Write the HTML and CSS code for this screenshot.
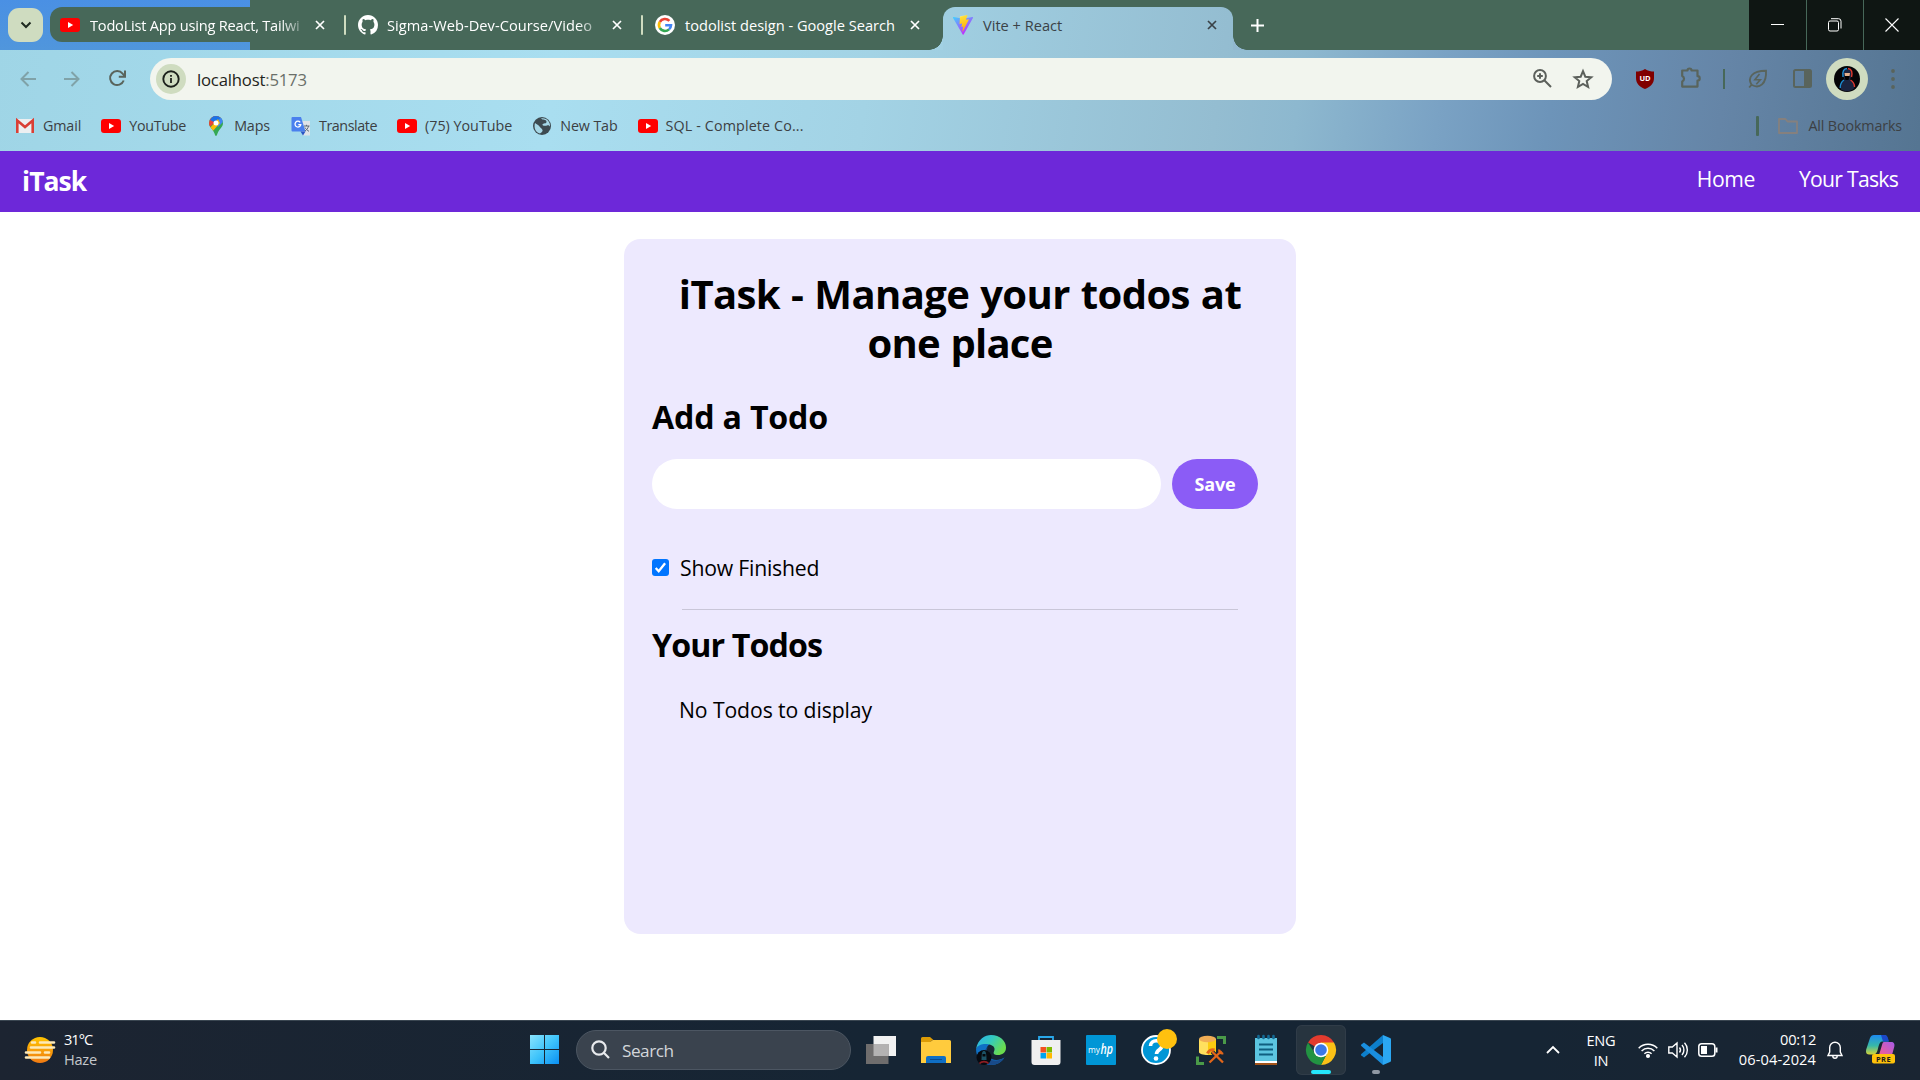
FILE: index.html
```html
<!DOCTYPE html>
<html lang="en">
<head>
<meta charset="utf-8">
<title>Vite + React</title>
<link rel="stylesheet" href="styles.css">
</head>
<body>
<svg class="defs" aria-hidden="true">
  <symbol id="yt" viewBox="0 0 20 20"><rect y="3" width="20" height="14" rx="3" fill="#f00"/><path d="M8 7l5.200 3L8 13z" fill="#fff"/></symbol>
  <symbol id="x" viewBox="0 0 10 10"><path d="M1 1l8 8M9 1L1 9" stroke="currentColor" stroke-width="1.700" fill="none"/></symbol>
</svg>

<header class="browser">
  <div class="tabstrip">
    <button class="tab-search"><svg width="12" height="8" viewBox="0 0 12 8"><path d="M1.500 1.500L6 6l4.500-4.500" fill="none" stroke="#1f2a20" stroke-width="2"/></svg></button>
    <div class="tab first">
      <svg class="fav"><use href="#yt"/></svg>
      <span class="tab-title fade">TodoList App using React, Tailwi</span>
      <svg class="close"><use href="#x"/></svg>
    </div>
    <i class="tab-sep"></i>
    <div class="tab second">
      <svg class="fav" viewBox="0 0 16 16"><path fill="#fff" d="M8 0C3.580 0 0 3.580 0 8c0 3.540 2.290 6.530 5.470 7.590.4.070.55-.17.55-.38 0-.19-.010-.82-.010-1.490-2.010.37-2.530-.49-2.690-.94-.090-.23-.48-.94-.82-1.130-.28-.15-.68-.52-.010-.53.63-.010 1.080.58 1.230.82.72 1.210 1.870.87 2.330.66.070-.52.28-.87.51-1.070-1.780-.2-3.640-.89-3.640-3.950 0-.87.31-1.590.82-2.150-.080-.2-.36-1.020.080-2.120 0 0 .67-.21 2.200.82.64-.18 1.320-.27 2-.27s1.360.090 2 .27c1.530-1.040 2.200-.82 2.200-.82.44 1.100.16 1.920.080 2.120.51.56.82 1.270.82 2.150 0 3.070-1.870 3.750-3.650 3.950.29.25.54.73.54 1.480 0 1.070-.010 1.930-.010 2.200 0 .21.15.46.55.38A8.010 8.010 0 0 0 16 8c0-4.420-3.580-8-8-8z"/></svg>
      <span class="tab-title fade">Sigma-Web-Dev-Course/Video</span>
      <svg class="close"><use href="#x"/></svg>
    </div>
    <i class="tab-sep"></i>
    <div class="tab third">
      <svg class="fav" viewBox="0 0 20 20"><circle cx="10" cy="10" r="10" fill="#fff"/><g fill="none" stroke-width="2.600"><path d="M14.400 5.900A6 6 0 0 0 4.800 7" stroke="#ea4335"/><path d="M4.800 7a6 6 0 0 0 0 6" stroke="#fbbc05"/><path d="M4.800 13a6 6 0 0 0 9.200 1.400" stroke="#34a853"/><path d="M14 14.400A6 6 0 0 0 16 10.200H10.200" stroke="#4285f4"/></g></svg>
      <span class="tab-title">todolist design - Google Search</span>
      <svg class="close"><use href="#x"/></svg>
    </div>
    <div class="tab active">
      <svg class="fav" viewBox="0 0 32 32"><defs><linearGradient id="va" x1="0" y1="0" x2=".6" y2=".9"><stop stop-color="#41d1ff"/><stop offset="1" stop-color="#bd34fe"/></linearGradient><linearGradient id="vb" x1=".4" y1="0" x2=".6" y2="1"><stop stop-color="#ffea83"/><stop offset=".1" stop-color="#ffdd35"/><stop offset="1" stop-color="#ffa800"/></linearGradient></defs><path d="M31.900 4.800L17 31c-.3.600-1.100.6-1.500 0L.1 4.800C-.3 4 .3 3.200 1.100 3.300l15 2.700 14.800-2.700c.8-.1 1.400.7 1 1.500z" fill="url(#va)"/><path d="M22.500 0l-11 2.100c-.2 0-.3.2-.3.400l-.7 11.400c0 .3.200.5.500.4l3-.7c.3-.1.600.2.5.5l-.9 4.500c-.1.300.2.500.5.400l1.900-.6c.3-.1.600.2.500.5l-1.500 7c-.1.400.5.700.8.300l9.400-18.600c.2-.3-.1-.7-.5-.6l-3.300.6c-.3.100-.6-.2-.5-.5L23 .5c.1-.3-.2-.6-.5-.5z" fill="url(#vb)"/></svg>
      <span class="tab-title">Vite + React</span>
      <svg class="close"><use href="#x"/></svg>
    </div>
    <svg class="new-tab" viewBox="0 0 13 13"><path d="M6.500 0v13M0 6.500h13" stroke="#fff" stroke-width="2"/></svg>
    <div class="win-controls">
      <button><svg width="14" height="14"><path d="M0 6.500h13" stroke="#fff"/></svg></button>
      <button><svg width="14" height="14" fill="none" stroke="#fff"><rect x=".5" y="3" width="10" height="10" rx="1.500"/><path d="M3 .7h7.500a2.500 2.500 0 0 1 2.500 2.500V10.500"/></svg></button>
      <button><svg width="14" height="14"><path d="M.5.5l13 13M13.500.5l-13 13" stroke="#fff" stroke-width="1.100"/></svg></button>
    </div>
  </div>

  <div class="toolbar">
    <svg class="nav back" viewBox="0 0 16 16"><path d="M16 8H1.500M8.500 1L1.500 8l7 7"/></svg>
    <svg class="nav fwd" viewBox="0 0 16 16"><path d="M0 8h14.500M7.500 1l7 7-7 7"/></svg>
    <svg class="nav reload" viewBox="0 0 17 17"><path d="M14.700 10.500A7 7 0 1 1 13.600 3.700L15.600 6"/><path d="M16 .5V6.700H9.800"/></svg>
    <div class="omnibox">
      <span class="info"><svg width="18" height="18" viewBox="0 0 18 18"><circle cx="9" cy="9" r="7.700" fill="none" stroke="#1c211b" stroke-width="1.900"/><path d="M9 8v5M9 4.900v1.900" stroke="#1c211b" stroke-width="1.800"/></svg></span>
      <span class="url">localhost<span class="port">:5173</span></span>
      <svg class="zoom" viewBox="0 0 19 19"><circle cx="7" cy="7" r="5.900"/><path d="M11.300 11.300l6.700 6.700M7 4.200v5.600M4.200 7h5.600"/></svg>
      <svg class="star" viewBox="0 0 20 20"><path d="M10 2.200l2.300 5.500 6 .5-4.600 3.900 1.400 5.900L10 14.900 4.900 18l1.400-5.900L1.700 8.200l6-.5z"/></svg>
    </div>
    <svg class="ublock" viewBox="0 0 20 20"><path d="M10 0c3 2 6 2.500 9 2.500V9c0 6-4 9-9 11C5 18 1 15 1 9V2.500C4 2.500 7 2 10 0z" fill="#800000"/><text x="10" y="12" text-anchor="middle" font-size="7.500" font-weight="700" fill="#fff">UD</text></svg>
    <svg class="puzzle" viewBox="0 0 22 22"><path d="M2.200 4.500H7.500a2 2 0 0 1 4 0h6v5.700a2.200 2.200 0 0 1 0 4.400v6H2.200v-5.200a3 3 0 0 0 0-5.500z" fill="none" stroke="#59645c" stroke-width="2.200" stroke-linejoin="round"/></svg>
    <i class="tool-sep"></i>
    <svg class="leaf" viewBox="0 0 20 20" fill="none" stroke="#59645c" stroke-width="1.900"><path d="M3.500 15.800C-.5 9 3.500 1.800 18 1.800c.8 13-6.500 18.600-14.500 14zM3.800 15.500L1.200 18.500"/><path d="M11.500 5L6.800 10.800h5.500L8.300 15.300" stroke-width="1.600"/></svg>
    <svg class="panel" viewBox="0 0 19 19"><rect x="1" y="1" width="17" height="17" rx="1.500" fill="none" stroke="#59645c" stroke-width="2"/><path d="M11 1h7v17h-7z" fill="#59645c"/></svg>
    <span class="avatar"><svg width="26" height="26" viewBox="0 0 26 26"><circle cx="13" cy="13" r="13" fill="#050507"/><path d="M6.500 23c0-5 1.500-8 4-9L9 9c0-4 2-6 4.500-6S18 5 17.500 9L16 14c3 1 4.500 4 4.500 8-3 4-11 4-14 1z" fill="#1b2440"/><path d="M9 11C8 5 10 2.700 13 2.500M10 14c-3 2-3.800 5-3.800 8" stroke="#1d8fd6" stroke-width="1.400" fill="none"/><path d="M14 2.500c4 .5 4.500 4 3.500 8.500M16.500 14c3.500 2 4 5 4 7" stroke="#e0392f" stroke-width="1.400" fill="none"/><path d="M10.500 7h5.500l-.5 3h-4.500z" fill="#e3b08e"/><path d="M10.500 10h5l-1 4h-3z" fill="#000"/></svg></span>
    <svg class="dots" viewBox="0 0 4 20" fill="#59645c"><circle cx="2" cy="2" r="1.900"/><circle cx="2" cy="10" r="1.900"/><circle cx="2" cy="18" r="1.900"/></svg>
  </div>

  <nav class="bookmarks">
    <a class="gmail"><svg viewBox="0 0 20 20"><rect x="1" y="3" width="18" height="14" rx="1.500" fill="#eceff1"/><path d="M2.300 17V4.500L10 11l7.700-6.500V17" fill="none" stroke="#d93f35" stroke-width="2.600"/></svg><span>Gmail</span></a>
    <a class="youtube"><svg><use href="#yt"/></svg><span>YouTube</span></a>
    <a><svg viewBox="0 0 20 20"><defs><clipPath id="pin"><path d="M10 0a7 7 0 0 1 7 7c0 4-3.500 5.500-5.500 10.500C11 19 10.700 20 10 20s-1-1-1.500-2.500C6.500 12.500 3 11 3 7a7 7 0 0 1 7-7z"/></clipPath></defs><g clip-path="url(#pin)"><path d="M0 0h20v20H0z" fill="#34a853"/><path d="M0 14L17 0H0z" fill="#ea4335"/><path d="M7 0L4 4l6 3 7-3V0z" fill="#1a73e8"/><path d="M10 7l6-7 4 3-8 8z" fill="#4285f4"/><path d="M3 13l9-10 2 4-8 9z" fill="#fbbc04"/></g><circle cx="10" cy="7" r="2.500" fill="#fff"/></svg><span>Maps</span></a>
    <a class="translate"><svg viewBox="0 0 20 20"><path d="M8 5h11v14.500H12z" fill="#dfe3e8"/><path d="M1.500 1h8.500l4.500 14.500h-13A1 1 0 0 1 .5 14.500V2a1 1 0 0 1 1-1z" fill="#4a80ee"/><path d="M9.500 15.500h5L12 19.500z" fill="#2a56c6"/><path d="M9.200 6.300A2.900 2.900 0 1 0 9.800 8.600H7.300" fill="none" stroke="#fff" stroke-width="1.300"/><path d="M13 10h5.500M15.500 8.800V10M17.500 10c-.5 2.500-2 4-3.500 5M14 11.500c.8 1.800 2.500 3 4 3.800" stroke="#5f6b78" fill="none"/></svg><span>Translate</span></a>
    <a class="queue"><svg><use href="#yt"/></svg><span>(75) YouTube</span></a>
    <a><svg viewBox="0 0 20 20"><circle cx="10" cy="10" r="9" fill="#3d4a50"/><path d="M3 7c2 2 3.500 1.500 4.500 3.500S10 12 10.500 14 8.500 17 8 17.500C4 17 1.500 12 3 7zM9 2.500c2 2 5 .5 5.500 3S11 7 10.500 8.500s3 1.500 4.500 1 2 0 3 1c.5-4-3-9-9-8z" fill="#a6d7e6"/></svg><span>New Tab</span></a>
    <a class="sql"><svg><use href="#yt"/></svg><span>SQL - Complete Co...</span></a>
    <i class="mark-sep"></i>
    <svg class="folder" viewBox="0 0 20 16"><path d="M1 1h6.500l2 2.500H19V15H1z" fill="none" stroke="#85807e" stroke-width="1.800" stroke-linejoin="round"/></svg>
    <span>All Bookmarks</span>
  </nav>
</header>

<main class="page">
  <nav class="site-nav">
    <span class="brand">iTask</span>
    <ul><li>Home</li><li class="tasks">Your Tasks</li></ul>
  </nav>
  <section class="card">
    <h1>iTask - Manage your todos at <span>one place</span></h1>
    <h2 class="add">Add a Todo</h2>
    <div class="entry"><input type="text"><button>Save</button></div>
    <label class="finished"><span class="check"><svg viewBox="0 0 17 17"><path d="M3.700 9l3 3.300 6.400-8" fill="none" stroke="#fff" stroke-width="2.300"/></svg></span>Show Finished</label>
    <hr>
    <h2 class="yours">Your Todos</h2>
    <p class="empty">No Todos to display</p>
  </section>
</main>

<footer class="taskbar">
  <div class="weather">
    <svg width="30" height="28" viewBox="0 0 30 28"><defs><linearGradient id="sun" x1="0" y1="0" x2="0" y2="1"><stop stop-color="#ffc400"/><stop offset="1" stop-color="#f07a13"/></linearGradient></defs><circle cx="15" cy="14" r="13" fill="url(#sun)"/><g stroke="#fde9b8" stroke-width="2.600" stroke-linecap="round"><path d="M7 6.500h3M15 6.500h14M6 11.500h23M1 16.500h14M20 16.500h4M1 21.500h23"/></g></svg>
    <p><span class="temp">31°C</span><br><span class="dim">Haze</span></p>
  </div>
  <svg class="start" viewBox="0 0 29 29"><defs><linearGradient id="win" x1="0" y1="0" x2="1" y2="1"><stop stop-color="#8ae4fd"/><stop offset=".5" stop-color="#3fc4fb"/><stop offset="1" stop-color="#0a8ff2"/></linearGradient></defs><path d="M0 0h14v14H0zM15 0h14v14H15zM0 15h14v14H0zM15 15h14v14H15z" fill="url(#win)"/></svg>
  <div class="search"><svg width="19" height="19" viewBox="0 0 19 19" fill="none" stroke="#e8eaed" stroke-width="2.200"><circle cx="8" cy="8" r="6.700"/><path d="M12.800 12.800L18 18"/></svg><span>Search</span></div>
  <div class="apps">
    <span><svg viewBox="0 0 30 30"><rect x="7.500" y="1" width="22.500" height="20" fill="#f2f2f2"/><rect x="0" y="9" width="22.500" height="20" fill="#6f6d6d"/><rect x="7.500" y="9" width="15" height="12" fill="#b4b2b2"/></svg></span>
    <span><svg viewBox="0 0 30 30"><path d="M0 3.500A1.500 1.500 0 0 1 1.500 2H9l4 3.500h-2L8 8H0z" fill="#dd9c06"/><path d="M0 7h9l3-2h16.500A1.500 1.500 0 0 1 30 6.500V28H0z" fill="#ffcb3d"/><path d="M5 28v-5a2 2 0 0 1 2-2h16a2 2 0 0 1 2 2v5z" fill="#0f6fc5"/><path d="M9 24.500h12" stroke="#0a4a8f"/></svg></span>
    <span><svg viewBox="0 0 30 30"><defs><linearGradient id="ed" x1="0" y1="0" x2="1" y2=".5"><stop stop-color="#2bb0ee"/><stop offset=".5" stop-color="#33c9c0"/><stop offset="1" stop-color="#6bdc4e"/></linearGradient></defs><path d="M0 14C3 7 9 6 14 9c-4 2-5 8-2 12 4 5 11 5 16.500 1.500C26 27 21 30 15 30 6 30 0 23 0 14z" fill="#0f70c4"/><path d="M12 12c-4 6 0 14 8 13.500 3 0 6-1 8.500-3C26 27 21 30 15 30 6 30 4 18 12 12z" fill="#194a88"/><path d="M0 14C2 4 9 0 15 0c9 0 15 6 15 12.500C30 18 26 20 22 20s-5-1.500-4-3.500 1-5-3-6.500S3 8 0 14z" fill="url(#ed)"/><circle cx="8" cy="22.500" r="7.500" fill="#070a10"/><path d="M5.500 25c0-8 1-9 2.500-9s2.500 1 2.500 9z" fill="#1c5266"/><path d="M6.500 19h3v2.500h-3z" fill="#06080c"/><path d="M3.500 28.500c2-2.500 7-2.500 9 0" stroke="#8c1d22" fill="none" stroke-width="1.600"/></svg></span>
    <span><svg viewBox="0 0 30 30"><path d="M8 6V2h14v4" fill="none" stroke="#29a8ea" stroke-width="1.800"/><path d="M.5 5h29v22a3 3 0 0 1-3 3h-23a3 3 0 0 1-3-3z" fill="#f0f0f0"/><path d="M9.500 12H15v5.500H9.500z" fill="#f25022"/><path d="M15.500 12H21v5.500h-5.500z" fill="#7fba00"/><path d="M9.500 18H15v5.500H9.500z" fill="#00a4ef"/><path d="M15.500 18H21v5.500h-5.500z" fill="#ffb900"/></svg></span>
    <span><svg viewBox="0 0 30 30"><rect width="30" height="30" rx="1" fill="#0096d6"/><text x="2" y="18" font-size="9" fill="#fff" textLength="12" lengthAdjust="spacingAndGlyphs">my</text><text x="14.500" y="19" font-size="13.500" font-weight="600" font-style="italic" fill="#fff" textLength="12.500" lengthAdjust="spacingAndGlyphs">hp</text></svg></span>
    <span><svg viewBox="0 0 30 30"><circle cx="15" cy="15" r="14" fill="#0096d6" stroke="#fff" stroke-width="1.800"/><path d="M9.500 11c0-7 11.500-7 11.500-.5 0 4.500-5.500 4-5.500 8.500" fill="none" stroke="#fff" stroke-width="3.600"/><circle cx="15" cy="23.500" r="2.300" fill="#fff"/><circle cx="26" cy="4" r="10" fill="#ffc10f"/></svg></span>
    <span><svg viewBox="0 0 30 30"><path d="M3 4v13c0 4 17 4 17 0V4z" fill="#ffe05e"/><path d="M12 5h8v12c-2 2.500-5 3-8 3z" fill="#fbcb10"/><ellipse cx="11.500" cy="4" rx="8.500" ry="3.200" fill="#f0ad55"/><path d="M21 2.500h7.500V9M1.500 21.500v7H8" fill="none" stroke="#4a9a48" stroke-width="3"/><g fill="none" stroke="#162534" stroke-width="4"><path d="M13.500 27.500l12-11.500M16 16.500l11 11"/></g><g fill="none" stroke="#e2661a"><path d="M13.500 27.500l12-11.500M16 16.500l11 11" stroke-width="2.300"/><path d="M11.500 18.500c1-3 4-4.500 7-3.500" stroke-width="3"/><path d="M23.300 14.500c-.5 2.800 1.500 4.300 4 3.700" stroke-width="2.200"/></g></svg></span>
    <span><svg viewBox="0 0 30 30"><path d="M4 3h22v24H4z" fill="#5cc5e0"/><path d="M4 26h22v2H4z" fill="#fff"/><path d="M4 28h22v2H4z" fill="#a3541a"/><path d="M8 9.500h14M8 14.500h14M8 19.500h14" stroke="#0f5f80" stroke-width="2"/><path d="M7.500 1v2M12.500 1v2M17.500 1v2M22.500 1v2" stroke="#146a94" stroke-width="2.600" stroke-linecap="round"/></svg></span>
    <span class="current"><svg viewBox="0 0 30 30"><path d="M15 15L2 7.500A15 15 0 0 1 28 7.500z" fill="#e33b2e"/><path d="M15 7.500h13A15 15 0 0 1 15 30l6-11.500z" fill="#fbc116"/><path d="M2 7.500L8.900 18.500 15 22l6-3.500L15 30A15 15 0 0 1 2 7.500z" fill="#229342"/><circle cx="15" cy="15" r="7.300" fill="#fff"/><circle cx="15" cy="15" r="5.800" fill="#3b78e7"/></svg></span>
    <span class="running"><svg viewBox="0 0 30 30"><path d="M22 0l7 3a1.500 1.500 0 0 1 1 1.500v21a1.500 1.500 0 0 1-1 1.500l-7 3z" fill="#2ba7f2"/><path d="M22 8L3 22.500.3 20.500a1 1 0 0 1 0-1.500L22 0z" fill="#0d7fcb"/><path d="M22 22L3 7.500.3 9.500a1 1 0 0 0 0 1.500L22 30z" fill="#1a8fdf"/></svg></span>
  </div>
  <div class="tray">
    <svg class="chev" viewBox="0 0 14 8"><path d="M1 7l6-6 6 6" fill="none" stroke="#fff" stroke-width="1.800"/></svg>
    <p class="lang">ENG<br>IN</p>
    <svg class="wifi" viewBox="0 0 20 16" fill="none" stroke="#fff" stroke-width="1.500"><path d="M.7 6.200a13.200 13.200 0 0 1 18.600 0M3.600 9a9 9 0 0 1 12.800 0M6.400 11.700a5.100 5.100 0 0 1 7.200 0"/><circle cx="10" cy="14" r="1.300" fill="#fff"/></svg>
    <svg class="vol" viewBox="0 0 20 18" fill="none" stroke="#fff" stroke-width="1.400"><path d="M.8 6h3.500L9 2v14l-4.700-4H.8zM11.500 6.500a4 4 0 0 1 0 5M14 4a7.500 7.500 0 0 1 0 10M16.500 1.800a10.500 10.500 0 0 1 0 14.400"/></svg>
    <svg class="batt" viewBox="0 0 20 14"><rect x=".8" y=".8" width="16" height="12.400" rx="2.800" fill="none" stroke="#fff" stroke-width="1.500"/><rect x="3" y="3" width="6" height="8" fill="#fff"/><path d="M18.500 4.500v5" stroke="#fff" stroke-width="2"/></svg>
    <p class="clock"><span>00:12</span><br>06-04-2024</p>
    <svg class="bell" viewBox="0 0 16 18" fill="none" stroke="#fff" stroke-width="1.400"><path d="M1 14.500h14L13.300 11V6.500a5.300 5.300 0 0 0-10.600 0V11zM5.800 15a2.200 2.200 0 0 0 4.400 0"/></svg>
    <svg class="copilot" viewBox="0 0 29 29"><defs><linearGradient id="ca" x1="0" y1="0" x2="0" y2="1"><stop stop-color="#1d8af0"/><stop offset=".55" stop-color="#37b8a8"/><stop offset="1" stop-color="#d4d437"/></linearGradient><linearGradient id="cb" x1="0" y1="1" x2="1" y2="0"><stop stop-color="#f55d8f"/><stop offset="1" stop-color="#a65bea"/></linearGradient></defs><path d="M8 0h10c3 0 3.500 3 4.500 6.500H16c-2 0-3 3-4 7s-2 6-5 6H3c-3 0-3.500-3-2.500-6L4 3c.8-2 2-3 4-3z" fill="url(#ca)"/><path d="M15 0h4c2.500 0 3 3 4 6.500h-6z" fill="#1b48c8"/><path d="M18 7h7c3 0 4 2 3.200 5L26 20H13l3-10c.5-2 1-3 2-3z" fill="url(#cb)"/><rect x="6" y="19" width="23" height="9.500" rx="2" fill="#ffc20a"/><text x="17.500" y="26.500" text-anchor="middle" font-size="7.500" font-weight="700" letter-spacing=".4" fill="#1c1c1c">PRE</text></svg>
  </div>
</footer>
</body>
</html>
```
FILE: styles.css
```css
* { box-sizing: border-box; }
body { margin: 0; height: 1080px; display: flex; flex-direction: column; overflow: hidden; background: #fff; color: #000; font-family: "Open Sans", "Noto Sans", sans-serif; }
button { border: 0; padding: 0; font-family: inherit; display: flex; align-items: center; justify-content: center; }
h1, h2, p, ul { margin: 0; padding: 0; }
svg { flex: none; overflow: visible; }
.defs { display: none; }
.dim { color: #c3c7cc; letter-spacing: -.25px; }

/* Browser chrome */
.browser, .tab.active { background: linear-gradient(98deg, #9fd5e6 0, #a9def0 560px, #a3d3e5 870px, #94bdd1 1220px, #8db8cf 1300px, #7aa2c4 1440px, #6d94b9 1550px, #6585a7 1720px, #557592 1920px) fixed; }
.browser { height: 151px; flex: none; }
.tabstrip { height: 50px; display: flex; align-items: flex-start; background: linear-gradient(#4a90e4, #5096dc) 0 0 / 250px 50px no-repeat #476859; color: #fff; font-size: 14.600px; }
.tab-search { width: 35px; height: 34px; margin: 8px 7px 0 8px; border-radius: 11px; background: #cfdcc0; }
.tab { display: flex; align-items: center; height: 35px; margin-top: 7px; }
.first { width: 294px; padding: 0 19px 0 10px; background: #476859; border-radius: 12px 0 0 12px; }
.second { width: 295px; padding: 0 19px 0 12px; }
.second .fav { margin-right: 9px; }
.third { width: 300px; padding: 0 23px 0 12px; }
.active { position: relative; width: 290px; height: 43px; padding: 0 16px 8px 10px; border-radius: 12px 12px 0 0; color: #3a4247; }
.active::before, .active::after { content: ""; position: absolute; bottom: 0; width: 14px; height: 14px; }
.active::before { left: -14px; background: radial-gradient(circle at 0 0, transparent 13.500px, #a2d1e3 14px); }
.active::after { right: -14px; background: radial-gradient(circle at 100% 0, transparent 13.500px, #92b8cf 14px); }
.fav { width: 20px; height: 20px; margin-right: 10px; }
.tab-title { flex: 1; white-space: nowrap; }
.fade { margin-right: 8px; letter-spacing: .05px; -webkit-mask-image: linear-gradient(90deg, #000 88%, transparent 101%); mask-image: linear-gradient(90deg, #000 88%, transparent 101%); }
.first .fade { letter-spacing: -.22px; }
.close { width: 10px; height: 10px; }
.tab-sep { width: 2px; height: 20px; margin-top: 15px; border-radius: 1px; background: #cfdcc0; }
.new-tab { width: 13px; height: 13px; margin: 19px 0 0 18px; }
.win-controls { display: flex; gap: 1px; margin-left: auto; }
.win-controls button { width: 56px; height: 50px; background: #0f1613; }
.win-controls button:first-child { width: 57px; }

.toolbar { height: 57px; display: flex; align-items: center; padding: 0 25px 0 20px; }
.nav { width: 16px; height: 16px; fill: none; stroke: #59645c; stroke-width: 2; }
.back, .fwd { opacity: .45; }
.fwd { margin-left: 28px; }
.reload { width: 17px; height: 17px; margin: 0 24px 0 29px; }
.omnibox { width: 1462px; height: 42px; display: flex; align-items: center; padding: 0 19px 0 6px; border-radius: 21px; background: #f2f5ee; font-size: 16.700px; letter-spacing: -.19px; color: #1f2420; }
.info { width: 30px; height: 30px; margin-right: 11px; border-radius: 50%; display: grid; place-items: center; background: #cfdcc0; }
.url { padding-top: 1px; }
.port { color: #6a6f69; }
.zoom, .star { fill: none; stroke: #5c605b; stroke-width: 2; }
.zoom { width: 19px; height: 19px; margin: 0 21px 0 auto; }
.star { width: 20px; height: 20px; }
.ublock { width: 20px; height: 20px; margin-left: 23px; }
.puzzle { width: 22px; height: 22px; margin: -3px 21px 0 25px; }
.tool-sep { width: 2px; height: 20px; background: #476859; }
.leaf { width: 20px; height: 20px; margin: 0 25px 0 23px; }
.panel { width: 19px; height: 19px; margin-right: 14px; }
.avatar { width: 42px; height: 42px; border-radius: 50%; display: grid; place-items: center; background: #cfdcc0; }
.dots { width: 4px; height: 20px; margin-left: auto; }

.bookmarks { height: 37px; display: flex; align-items: center; padding: 0 18px 0 15px; color: #3c4043; font-size: 14.300px; letter-spacing: -.13px; white-space: nowrap; }
.bookmarks a { display: flex; align-items: center; gap: 8px; margin-right: 20px; }
.bookmarks a svg { width: 20px; height: 20px; }
.bookmarks .youtube { letter-spacing: -.26px; }
.bookmarks .translate { margin-left: 1px; letter-spacing: -.43px; }
.bookmarks .queue { letter-spacing: 0; }
.bookmarks .sql { letter-spacing: .13px; }
.mark-sep { width: 3px; height: 20px; margin-left: auto; border-radius: 1px; background: #476859; }
.folder { width: 20px; height: 16px; margin: 0 10px 0 19px; }

/* Todo app */
.page { flex: 1; }
.site-nav { height: 61px; display: flex; justify-content: space-between; align-items: center; padding: 0 22px; background: #6d28d9; color: #fff; }
.brand { margin-top: -1px; font-size: 26.500px; font-weight: 700; letter-spacing: -.95px; }
.site-nav ul { display: flex; gap: 44px; margin-top: -7px; list-style: none; font-size: 21.200px; letter-spacing: -.4px; }
.site-nav .tasks { letter-spacing: -.75px; }
.card { width: 672px; height: 695px; margin: 27px auto 0; padding: 30px 28px 0; border-radius: 16.500px; background: #ede9fe; }
.card h1 { padding: 0 20px; font-size: 40px; line-height: 49px; letter-spacing: -.6px; word-spacing: 1.200px; text-align: center; font-weight: 700; }
.card h1 span { display: block; letter-spacing: -.8px; }
.card h2 { font-size: 32.200px; line-height: 44px; letter-spacing: -.2px; font-weight: 700; }
.card .add { margin-top: 28px; }
.entry { display: flex; gap: 11px; margin-top: 20px; }
.entry input { width: 509px; height: 50px; border: 0; border-radius: 25px; background: #fff; }
.entry button { width: 86px; height: 50px; border-radius: 25px; background: #8b5cf6; color: #fff; font-size: 18px; letter-spacing: -.15px; font-weight: 700; }
.finished { display: flex; align-items: center; gap: 11px; height: 33px; margin-top: 42px; font-size: 21.200px; letter-spacing: -.2px; }
.check { width: 17px; height: 17px; margin-top: -1px; border-radius: 3px; background: #0075ff; }
.check svg { display: block; width: 17px; height: 17px; }
.card hr { width: 556px; height: 1px; margin: 25px 0 0 30px; border: 0; background: #c9c6d8; }
.card .yours { margin-top: 13px; letter-spacing: -.9px; }
.empty { margin: 26px 0 0 27px; font-size: 21.200px; line-height: 33px; letter-spacing: -.1px; }

/* Windows taskbar */
.taskbar { height: 60px; flex: none; display: flex; align-items: center; padding-bottom: 1px; box-shadow: inset 0 1px #3a4651; background: linear-gradient(90deg, #1c2431, #162534 45%, #162534 80%, #1a2532); color: #fff; font-size: 14.600px; line-height: 20px; }
.taskbar p { margin-top: -1px; }
.weather { width: 530px; display: flex; align-items: center; gap: 9px; padding-left: 25px; }
.temp { letter-spacing: -1px; }
.start { width: 29px; height: 29px; }
.search { width: 275px; height: 40px; margin-left: 17px; padding-left: 14px; display: flex; align-items: center; gap: 12px; border: 1px solid #4c5662; border-radius: 20px; background: #3a434e; color: #d3d6da; font-size: 17.200px; letter-spacing: -.5px; }
.search span { margin-top: 2px; }
.apps { display: flex; margin-left: 2px; }
.apps span { position: relative; width: 55px; height: 50px; display: grid; place-items: center; }
.apps svg { width: 30px; height: 30px; }
.apps .current { width: 50px; margin: 0 2px 0 3px; border-radius: 6px; background: #27343f; box-shadow: inset 0 0 0 1px #303c48; }
.current::after, .running::after { content: ""; position: absolute; bottom: 1px; left: 50%; height: 4px; border-radius: 2px; transform: translateX(-50%); }
.current::after { width: 20px; background: #25e6fb; }
.running::after { width: 8px; background: #8f98a3; }
.tray { display: flex; align-items: center; margin-left: auto; padding-right: 25px; }
.chev { width: 14px; height: 8px; margin-right: 26px; }
.tray .lang { width: 30px; margin: 1px 22px 0 0; text-align: center; letter-spacing: -.25px; }
.wifi { width: 20px; height: 16px; margin-right: 10px; }
.vol { width: 20px; height: 18px; margin-right: 10px; }
.batt { width: 20px; height: 14px; }
.clock { width: 98px; text-align: right; white-space: nowrap; letter-spacing: .1px; }
.clock span { letter-spacing: -.25px; }
.bell { width: 16px; height: 18px; margin: 0 23px 0 11px; }
.copilot { width: 29px; height: 29px; }
```
